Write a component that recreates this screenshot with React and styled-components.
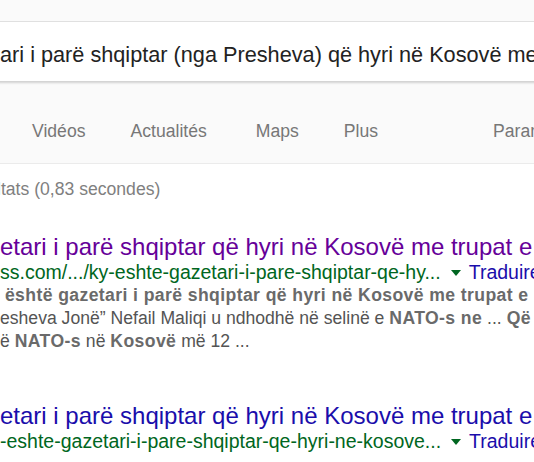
import React from 'react';
import styled, { createGlobalStyle } from 'styled-components';

const GlobalStyle = createGlobalStyle`
  html, body {
    margin: 0;
    padding: 0;
    background: #fff;
    overflow: hidden;
    font-family: "Liberation Sans", Arial, sans-serif;
  }
`

const Header = styled.div`
  background: #fafafa;
  padding-top: 21px;
  border-bottom: 1px solid #ebebeb;
`

const SearchBox = styled.div`
  height: 60px;
  box-sizing: border-box;
  margin: 0 -10px;
  padding: 6px 10px 0;
  background: #fff;
  border-top: 1px solid #e0e0e0;
  box-shadow: 0 2px 2px rgba(0, 0, 0, 0.16);
  display: flex;
  align-items: center;
  font-size: 21.7px;
  color: #222;
  white-space: nowrap;
  overflow: hidden;
`

const Tabs = styled.nav`
  height: 82px;
  box-sizing: border-box;
  padding: 39px 0 0 32px;
  display: flex;
  white-space: nowrap;
`

const Tab = styled.span`
  font-size: 17.6px;
  line-height: 22px;
  color: #777;
  margin-right: ${p => p.gap}px;
`

const Results = styled.div`
  padding-top: 14px;
`

const Stats = styled.div`
  font-size: 17.6px;
  line-height: 22px;
  color: #808080;
  margin-left: -3px;
  white-space: nowrap;
`

const Result = styled.div`
  margin-top: ${p => p.top}px;
  white-space: nowrap;
  overflow: hidden;
`

const Title = styled.div`
  font-size: 24px;
  line-height: 26px;
  color: ${p => (p.visited ? '#660099' : '#1a0dab')};
`

const UrlRow = styled.div`
  font-size: 19.5px;
  line-height: 24px;
  color: #006621;
  display: flex;
  align-items: center;
`

const Arrow = styled.span`
  width: 0;
  height: 0;
  border-left: 5px solid transparent;
  border-right: 5px solid transparent;
  border-top: 6px solid #006621;
  margin: 2px 8px 0 10px;
`

const Translate = styled.span`
  color: #1a0dab;
`

const Snippet = styled.div`
  font-size: 17.6px;
  line-height: 23px;
  color: #545454;

  b {
    color: #6a6a6a;
    letter-spacing: 0.4px;
  }
`

export default function App() {
  return (
    <>
      <GlobalStyle />
      <Header>
        <SearchBox>ari i parë shqiptar (nga Presheva) që hyri në Kosovë me trupat e NATO-s</SearchBox>
        <Tabs>
          <Tab gap={45}>Vidéos</Tab>
          <Tab gap={49}>Actualités</Tab>
          <Tab gap={45}>Maps</Tab>
          <Tab gap={115}>Plus</Tab>
          <Tab gap={0}>Paramètres</Tab>
        </Tabs>
      </Header>
      <Results>
        <Stats>ltats (0,83 secondes)</Stats>
        <Result top={34}>
          <Title visited>etari i parë shqiptar që hyri në Kosovë me trupat e NATO-s</Title>
          <UrlRow>
            ss.com/.../ky-eshte-gazetari-i-pare-shqiptar-qe-hy...
            <Arrow />
            <Translate>Traduire cette page</Translate>
          </UrlRow>
          <Snippet>
            &nbsp;<b>është gazetari i parë shqiptar që hyri në Kosovë me trupat e NATO-s</b>
            <br />
            esheva Jonë” Nefail Maliqi u ndhodhë në selinë e <b>NATO-s ne</b> ... <b>Që</b>
            <br />
            ë <b>NATO-s</b> në <b>Kosovë</b> më 12 ...
          </Snippet>
        </Result>
        <Result top={50}>
          <Title>etari i parë shqiptar që hyri në Kosovë me trupat e NATO-s</Title>
          <UrlRow>
            -eshte-gazetari-i-pare-shqiptar-qe-hyri-ne-kosove...
            <Arrow />
            <Translate>Traduire cette page</Translate>
          </UrlRow>
        </Result>
      </Results>
    </>
  );
}
